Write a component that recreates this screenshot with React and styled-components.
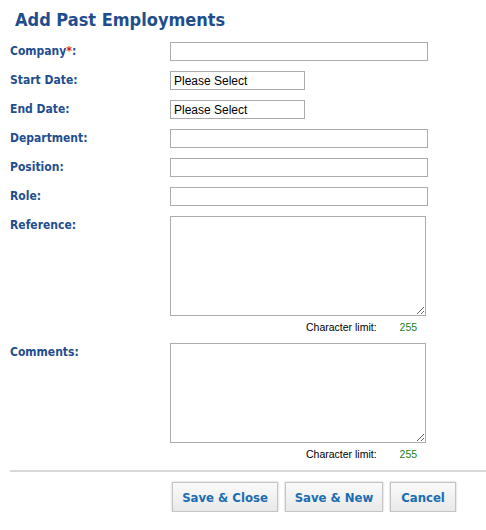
import React from 'react';
import styled, { createGlobalStyle } from 'styled-components';

const GlobalStyle = createGlobalStyle`
  body {
    margin: 0;
    background: #fff;
    font-family: "DejaVu Sans Condensed", "DejaVu Sans", sans-serif;
  }
`;

const Page = styled.div`
  width: 486px;
  padding: 9px 0 0 10px;
  box-sizing: border-box;
`;

const Title = styled.h1`
  margin: 0 0 11px 5px;
  font-size: 18px;
  font-weight: bold;
  color: #1f4e8f;
  line-height: 22px;
`;

const Form = styled.div`
  display: grid;
  grid-template-columns: 160px 1fr;
  row-gap: 10px;
`;

const Label = styled.label`
  font-size: 12px;
  font-weight: bold;
  color: #1f4e8f;
  padding-top: 2px;
  line-height: 14px;
`;

const Star = styled.span`
  color: #e0131a;
`;

const TextInput = styled.input`
  display: block;
  box-sizing: border-box;
  width: ${(p) => p.$width || 258}px;
  height: 19px;
  margin: 0;
  padding: 1px 3px;
  border: 1px solid #ababab;
  font-family: "Liberation Sans", Arial, sans-serif;
  font-size: 12px;
  color: #000;
  outline: none;
`;

const Field = styled.div`
  display: flex;
  flex-direction: column;
`;

const TextArea = styled.textarea`
  display: block;
  box-sizing: border-box;
  width: 256px;
  height: 100px;
  margin: 0;
  border: 1px solid #ababab;
  resize: both;
  outline: none;
`;

const Limit = styled.div`
  display: flex;
  gap: 23px;
  padding: 5px 0 0 136px;
  font-family: "Liberation Sans", Arial, sans-serif;
  font-size: 10.5px;
  line-height: 12px;
  color: #000;
`;

const LimitValue = styled.span`
  color: #1a7f1a;
`;

const Divider = styled.hr`
  margin: 10px 0 10px;
  border: 0;
  border-top: 2px solid #d8d8d8;
`;

const Actions = styled.div`
  display: flex;
  gap: 7px;
  padding-left: 162px;
`;

const Button = styled.button`
  height: 30px;
  padding: 0;
  width: ${(p) => p.$width}px;
  white-space: nowrap;
  border: 1px solid #c4c4c4;
  background: linear-gradient(#fafafa, #e9e9e9);
  box-shadow: 0 0 2px rgba(0, 0, 0, 0.25);
  font-family: "DejaVu Sans Condensed", "DejaVu Sans", sans-serif;
  font-size: 13px;
  font-weight: bold;
  color: #1a6db3;
  cursor: pointer;
`;

const CharLimit = () => (
  <Limit>
    <span>Character limit:</span>
    <LimitValue>255</LimitValue>
  </Limit>
);

export default function App() {
  return (
    <Page>
      <GlobalStyle />
      <Title>Add Past Employments</Title>
      <Form>
        <Label>
          Company<Star>*</Star>:
        </Label>
        <TextInput />
        <Label>Start Date:</Label>
        <TextInput $width={135} defaultValue="Please Select" />
        <Label>End Date:</Label>
        <TextInput $width={135} defaultValue="Please Select" />
        <Label>Department:</Label>
        <TextInput />
        <Label>Position:</Label>
        <TextInput />
        <Label>Role:</Label>
        <TextInput />
        <Label>Reference:</Label>
        <Field>
          <TextArea />
          <CharLimit />
        </Field>
        <Label>Comments:</Label>
        <Field>
          <TextArea />
          <CharLimit />
        </Field>
      </Form>
      <Divider />
      <Actions>
        <Button $width={106}>Save &amp; Close</Button>
        <Button $width={98}>Save &amp; New</Button>
        <Button $width={66}>Cancel</Button>
      </Actions>
    </Page>
  );
}
